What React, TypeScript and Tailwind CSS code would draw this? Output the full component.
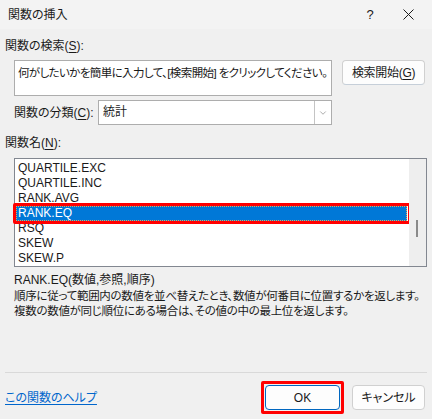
import { ChevronDown } from 'lucide-react';

const items = ['QUARTILE.EXC', 'QUARTILE.INC', 'RANK.AVG', 'RANK.EQ', 'RSQ', 'SKEW', 'SKEW.P'];

function Key({ k }: { k: string }) {
  return <span className="underline underline-offset-2">{k}</span>;
}

export default function App() {
  return (
    <div
      className="w-[432px] h-[419px] bg-[#f0f0f0] text-[12px] text-[#1a1a1a] flex flex-col overflow-hidden [font-feature-settings:'palt']"
      style={{ fontFamily: '"Liberation Sans", "Noto Sans CJK JP", sans-serif' }}
    >
      {/* title bar */}
      <div className="h-[29px] bg-[#f3f3f3] flex items-center pl-[8px] shrink-0">
        <span className="flex-1 pt-[1px]">関数の挿入</span>
        <span className="w-[20px] text-center text-[13px] mr-[23px]">?</span>
        <svg className="w-[11px] h-[11px] mr-[18px]" viewBox="0 0 11 11">
          <path d="M0.5 0.5 L10.5 10.5 M10.5 0.5 L0.5 10.5" stroke="#1a1a1a" strokeWidth="1" fill="none" />
        </svg>
      </div>

      <div className="h-[17px] leading-[17px] pl-[5px] mt-[9px]">
        関数の検索(<Key k="S" />):
      </div>

      <div className="flex items-start pl-[14px] mt-[5px]">
        <div className="w-[318px] h-[36px] bg-white border border-[#adadad] px-[3px] pt-[4px] leading-[16px] whitespace-nowrap overflow-hidden text-[11.5px] tracking-[-0.6px]">
          何がしたいかを簡単に入力して、[検索開始] をクリックしてください。
        </div>
        <button className="ml-[10px] w-[83px] h-[25px] bg-[#fdfdfd] border border-[#d0d0d0] border-b-[#c6cfd9] rounded-[4px] flex items-center justify-center tracking-[-0.3px]">
          検索開始(<Key k="G" />)
        </button>
      </div>

      <div className="flex items-center pl-[14px] mt-[4px] h-[25px]">
        <span className="w-[84px]">
          関数の分類(<Key k="C" />):
        </span>
        <div className="w-[234px] h-[25px] bg-white border border-[#adadad] flex">
          <span className="flex-1 pl-[4px] leading-[23px]">統計</span>
          <div className="w-[17px] border-l border-[#c4c4c4] flex items-center justify-center">
            <ChevronDown className="w-[10px] h-[10px] text-[#7a7a7a]" strokeWidth={1.5} />
          </div>
        </div>
      </div>

      <div className="h-[17px] leading-[17px] pl-[5px] mt-[10px]">
        関数名(<Key k="N" />):
      </div>

      <div className="ml-[14px] mt-[6px] w-[413px] h-[109px] bg-white border border-[#828790] flex">
        <div className="flex-1 pt-[2px] pr-[1px]">
          {items.map((it) =>
            it === 'RANK.EQ' ? (
              <div key={it} className="relative h-[15px] -ml-[1px]">
                <div className="absolute -left-[1px] -top-[3px] -right-[3px] -bottom-[3px] border-[3px] border-[#ff0000] rounded-[2px]" />
                <div className="h-[15px] ml-[2px] mr-[1px] bg-[#0078d7] text-white leading-[15px] pl-[2px] outline outline-1 outline-dotted outline-[#e2a45a] -outline-offset-1">
                  {it}
                </div>
              </div>
            ) : (
              <div key={it} className="h-[15px] leading-[15px] pl-[3px]">
                {it}
              </div>
            ),
          )}
        </div>
        <div className="w-[17px] bg-[#eeeeee] relative">
          <div className="absolute left-[7px] top-[61px] w-[2px] h-[17px] bg-[#8a8a8a]" />
        </div>
      </div>

      <div className="pl-[14px] mt-[5px] leading-[16px]">RANK.EQ(数値,参照,順序)</div>
      <div className="pl-[14px] mt-[1px] leading-[15px] text-[11.5px] tracking-[-0.3px] whitespace-nowrap">
        順序に従って範囲内の数値を並べ替えたとき、数値が何番目に位置するかを返します。
      </div>
      <div className="pl-[14px] leading-[15px] text-[11.5px] tracking-[-0.3px] whitespace-nowrap">
        複数の数値が同じ順位にある場合は、その値の中の最上位を返します。
      </div>

      <div className="ml-[5px] mr-[5px] mt-[53px] h-px bg-[#d9d9d9]" />

      <div className="flex items-center pl-[5px] mt-[8px]">
        <a className="flex-1 text-[#0066cc] underline underline-offset-2">この関数のヘルプ</a>
        <div className="border-[3px] border-[#ff0000] rounded-[2px] p-[1px]">
          <button className="w-[75px] h-[25px] bg-[#fdfdfd] border border-[#0067c0] rounded-[4px] flex items-center justify-center">
            OK
          </button>
        </div>
        <button className="ml-[8px] mr-[7px] w-[73px] h-[25px] bg-[#fdfdfd] border border-[#d0d0d0] rounded-[4px] flex items-center justify-center">
          キャンセル
        </button>
      </div>
    </div>
  );
}
